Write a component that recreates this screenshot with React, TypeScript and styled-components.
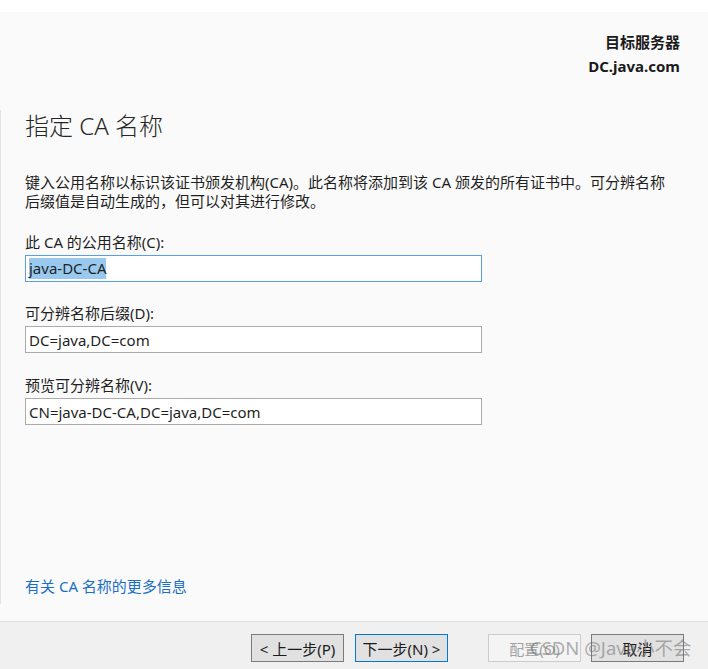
import React from 'react'
import styled, { createGlobalStyle } from 'styled-components'

const GlobalStyle = createGlobalStyle`
    html, body {
        margin: 0;
        padding: 0;
        background: #ffffff;
    }
    body {
        font-family: "Noto Sans", "Noto Sans CJK SC", sans-serif;
        color: #1f1f1f;
    }
`

const Window = styled.div`
    position: relative;
    display: flex;
    flex-direction: column;
    width: 708px;
    height: 669px;
    overflow: hidden;
`

const TopStrip = styled.div`
    height: 12px;
    background: #ffffff;
`

const Panel = styled.div`
    flex: 1;
    display: flex;
    flex-direction: column;
    background: #fafafa;
    padding-top: 18px;
`

const ServerInfo = styled.div`
    display: flex;
    flex-direction: column;
    align-items: flex-end;
    padding-right: 28px;
    font-size: 15px;
    font-weight: 700;
    line-height: 24px;
    color: #1a1a1a;
`

const Body = styled.div`
    flex: 1;
    display: flex;
    flex-direction: column;
    margin-top: 32px;
    margin-bottom: 17px;
    padding: 0 0 8px 24px;
    border-left: 1px solid #e2e2e2;
`

const Title = styled.h1`
    margin: 0;
    font-size: 24px;
    font-weight: 300;
    line-height: 32px;
    color: #262626;
`

const Description = styled.p`
    margin: 31px 0 0;
    font-size: 15px;
    line-height: 19px;
    white-space: nowrap;
`

const FieldGroup = styled.div<{ $gap: number }>`
    display: flex;
    flex-direction: column;
    margin-top: ${p => p.$gap}px;
`

const Label = styled.div`
    font-size: 15px;
    line-height: 20px;
    margin-bottom: 3px;
`

const TextBox = styled.div<{ $focused?: boolean }>`
    box-sizing: border-box;
    width: 457px;
    height: 27px;
    padding: 0 3px;
    display: flex;
    align-items: center;
    background: #ffffff;
    border: 1px solid ${p => (p.$focused ? '#5a9ee6' : '#ababab')};
    font-size: 15px;
    white-space: nowrap;
`

const Selection = styled.span`
    background: #99c9ef;
    line-height: 21px;
`

const HelpLink = styled.a`
    margin-top: auto;
    font-size: 15px;
    line-height: 20px;
    color: #1a6fc4;
    text-decoration: none;
`

const Footer = styled.div`
    height: 48px;
    box-sizing: border-box;
    display: flex;
    justify-content: flex-end;
    align-items: flex-start;
    gap: 40px;
    padding: 12px 24px 0 0;
    background: #f0f0f0;
    border-top: 1px solid #e0e0e0;
`

const ButtonGroup = styled.div<{ $gap: number }>`
    display: flex;
    gap: ${p => p.$gap}px;
`

const Button = styled.button<{ $primary?: boolean }>`
    box-sizing: border-box;
    width: 93px;
    height: 28px;
    padding: 0;
    font-family: "Noto Sans", "Noto Sans CJK SC", sans-serif;
    font-size: 15px;
    color: #1a1a1a;
    background: #e1e1e1;
    border: 1px solid ${p => (p.$primary ? '#0078d7' : '#7a7a7a')};

    &:disabled {
        color: #a3a3a3;
        background: #f4f4f4;
        border-color: #cccccc;
    }
`

const Watermark = styled.div`
    position: absolute;
    left: 530px;
    top: 634px;
    font-size: 18.5px;
    line-height: 28px;
    color: rgba(110, 110, 110, 0.55);
    white-space: nowrap;
    pointer-events: none;
`

export default function App() {
    return (
        <Window>
            <GlobalStyle />
            <TopStrip />
            <Panel>
                <ServerInfo>
                    <span>目标服务器</span>
                    <span>DC.java.com</span>
                </ServerInfo>
                <Body>
                    <Title>指定 CA 名称</Title>
                    <Description>
                        键入公用名称以标识该证书颁发机构(CA)。此名称将添加到该 CA 颁发的所有证书中。可分辨名称
                        <br />
                        后缀值是自动生成的，但可以对其进行修改。
                    </Description>
                    <FieldGroup $gap={21}>
                        <Label>此 CA 的公用名称(C):</Label>
                        <TextBox $focused>
                            <Selection>java-DC-CA</Selection>
                        </TextBox>
                    </FieldGroup>
                    <FieldGroup $gap={21}>
                        <Label>可分辨名称后缀(D):</Label>
                        <TextBox>DC=java,DC=com</TextBox>
                    </FieldGroup>
                    <FieldGroup $gap={22}>
                        <Label>预览可分辨名称(V):</Label>
                        <TextBox>CN=java-DC-CA,DC=java,DC=com</TextBox>
                    </FieldGroup>
                    <HelpLink href="#">有关 CA 名称的更多信息</HelpLink>
                </Body>
            </Panel>
            <Footer>
                <ButtonGroup $gap={11}>
                    <Button>&lt; 上一步(P)</Button>
                    <Button $primary>下一步(N) &gt;</Button>
                </ButtonGroup>
                <ButtonGroup $gap={10}>
                    <Button disabled>配置(O)</Button>
                    <Button>取消</Button>
                </ButtonGroup>
            </Footer>
            <Watermark>CSDN @Java小不会</Watermark>
        </Window>
    )
}
